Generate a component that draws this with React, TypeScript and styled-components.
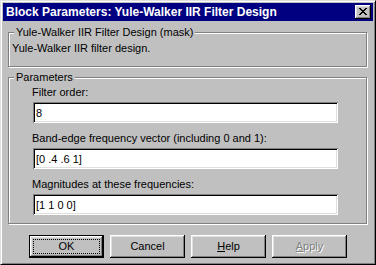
import styled, { createGlobalStyle } from "styled-components";

const GlobalStyle = createGlobalStyle`
  html, body {
    margin: 0;
    padding: 0;
    background: #c0c0c0;
  }
  body {
    font-family: "Liberation Sans", Arial, sans-serif;
    font-size: 11px;
    color: #000;
  }
`;

const Window = styled.div`
  box-sizing: border-box;
  width: 376px;
  height: 265px;
  background: #c0c0c0;
  border: 1px solid;
  border-color: #dfdfdf #000 #000 #dfdfdf;
  box-shadow: inset 1px 1px #fff, inset -1px -1px #808080;
  padding: 2px;
  display: flex;
  flex-direction: column;
`;

const TitleBar = styled.div`
  height: 18px;
  flex: none;
  background: #000080;
  display: flex;
  align-items: center;
  justify-content: space-between;
  padding: 0 2px 0 3px;
`;

const Title = styled.span`
  color: #fff;
  font-weight: bold;
  font-size: 12px;
  line-height: 14px;
  white-space: nowrap;
`;

const bevel = `
  box-shadow: inset -1px -1px #000, inset 1px 1px #fff,
    inset -2px -2px #808080, inset 2px 2px #dfdfdf;
`;

const CloseButton = styled.div`
  width: 16px;
  height: 14px;
  background: #c0c0c0;
  ${bevel}
  display: flex;
  align-items: center;
  justify-content: center;
  svg {
    display: block;
    margin: 0 0 1px 0;
  }
`;

const Body = styled.div`
  flex: 1;
  display: flex;
  flex-direction: column;
  padding: 5px 6px 0 5px;
`;

const GroupBox = styled.fieldset<{ $gap: number }>`
  margin: 0 0 ${(p) => p.$gap}px 0;
  padding: 0;
  min-inline-size: 0;
  border: 1px solid #808080;
  box-shadow: inset 1px 1px #fff, 1px 1px #fff;
`;

const Legend = styled.legend`
  margin-left: 5px;
  padding: 0 2px;
  line-height: 13px;
  background: #c0c0c0;
`;

const Description = styled.div`
  line-height: 13px;
  padding: 3px 3px 11px 3px;
`;

const Fields = styled.div`
  display: flex;
  flex-direction: column;
  gap: 8px;
  padding: 1px 28px 8px 24px;
`;

const Field = styled.div`
  display: flex;
  flex-direction: column;
`;

const Label = styled.div`
  line-height: 14px;
  height: 14px;
  margin: 0 0 3px -1px;
  white-space: nowrap;
`;

const TextBox = styled.div`
  box-sizing: border-box;
  height: 21px;
  background: #fff;
  box-shadow: inset 1px 1px #808080, inset -1px -1px #fff,
    inset 2px 2px #000, inset -2px -2px #dfdfdf;
  padding: 0 3px;
  display: flex;
  align-items: center;
  white-space: nowrap;
`;

const ButtonRow = styled.div`
  display: flex;
  justify-content: center;
  gap: 6px;
  margin-top: 11px;
  margin-left: -5px;
  margin-right: -6px;
`;

const Button = styled.div<{ $default?: boolean; $disabled?: boolean }>`
  box-sizing: border-box;
  width: 75px;
  height: 23px;
  background: #c0c0c0;
  ${bevel}
  display: flex;
  align-items: center;
  justify-content: center;
  line-height: 13px;
  color: ${(p) => (p.$disabled ? "#808080" : "#000")};
  text-shadow: ${(p) => (p.$disabled ? "1px 1px #fff" : "none")};
  ${(p) =>
    p.$default
      ? `
    border: 1px solid #000;
    outline: 1px dotted #000;
    outline-offset: -5px;
  `
      : ""}
  u {
    text-decoration-thickness: 1px;
    text-underline-offset: 1px;
  }
`;

const closeRows = [
  [0, 1, 6, 7],
  [1, 2, 5, 6],
  [2, 3, 4, 5],
  [3, 4],
  [2, 3, 4, 5],
  [1, 2, 5, 6],
  [0, 1, 6, 7],
];

function CloseGlyph() {
  return (
    <svg width="8" height="7" viewBox="0 0 8 7" shapeRendering="crispEdges">
      {closeRows.map((cols, y) =>
        cols.map((x) => <rect key={`${x}-${y}`} x={x} y={y} width="1" height="1" fill="#000" />)
      )}
    </svg>
  );
}

const fields = [
  { label: "Filter order:", value: "8" },
  { label: "Band-edge frequency vector (including 0 and 1):", value: "[0 .4 .6 1]" },
  { label: "Magnitudes at these frequencies:", value: "[1 1 0 0]" },
];

export default function App() {
  return (
    <>
      <GlobalStyle />
      <Window>
        <TitleBar>
          <Title>Block Parameters: Yule-Walker IIR Filter Design</Title>
          <CloseButton>
            <CloseGlyph />
          </CloseButton>
        </TitleBar>
        <Body>
          <GroupBox $gap={4}>
            <Legend>Yule-Walker IIR Filter Design (mask)</Legend>
            <Description>Yule-Walker IIR filter design.</Description>
          </GroupBox>
          <GroupBox $gap={0}>
            <Legend>Parameters</Legend>
            <Fields>
              {fields.map((f) => (
                <Field key={f.label}>
                  <Label>{f.label}</Label>
                  <TextBox>{f.value}</TextBox>
                </Field>
              ))}
            </Fields>
          </GroupBox>
          <ButtonRow>
            <Button $default>OK</Button>
            <Button>Cancel</Button>
            <Button>
              <span>
                <u>H</u>elp
              </span>
            </Button>
            <Button $disabled>
              <span>
                <u>A</u>pply
              </span>
            </Button>
          </ButtonRow>
        </Body>
      </Window>
    </>
  );
}
